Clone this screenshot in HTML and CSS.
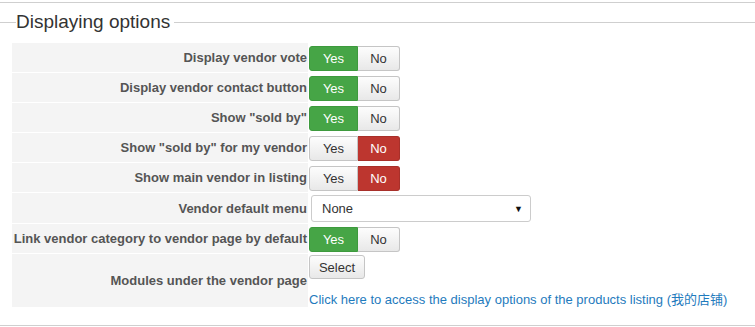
FILE: index.html
```html
<!DOCTYPE html>
<html lang="en">
  <head>
    <meta charset="UTF-8" />
    <title>Displaying options</title>
    <link rel="stylesheet" href="styles.css">
  </head>
  <body>
    <div class="topline"></div>

    <fieldset class="options">
      <legend>Displaying options</legend>

      <div class="form-grid">
        <div class="label">Display vendor vote</div>
        <div class="control">
          <div class="toggle">
            <span class="btn yes on">Yes</span><span class="btn no">No</span>
          </div>
        </div>

        <div class="label">Display vendor contact button</div>
        <div class="control">
          <div class="toggle">
            <span class="btn yes on">Yes</span><span class="btn no">No</span>
          </div>
        </div>

        <div class="label">Show "sold by"</div>
        <div class="control">
          <div class="toggle">
            <span class="btn yes on">Yes</span><span class="btn no">No</span>
          </div>
        </div>

        <div class="label">Show "sold by" for my vendor</div>
        <div class="control">
          <div class="toggle">
            <span class="btn yes">Yes</span><span class="btn no on">No</span>
          </div>
        </div>

        <div class="label">Show main vendor in listing</div>
        <div class="control">
          <div class="toggle">
            <span class="btn yes">Yes</span><span class="btn no on">No</span>
          </div>
        </div>

        <div class="label wide">Vendor default menu</div>
        <div class="control">
          <div class="dropdown">
            <span>None</span>
            <span class="caret">&#9660;</span>
          </div>
        </div>

        <div class="label">Link vendor category to vendor page by default</div>
        <div class="control">
          <div class="toggle">
            <span class="btn yes on">Yes</span><span class="btn no">No</span>
          </div>
        </div>

        <div class="label tall">Modules under the vendor page</div>
        <div class="control stack">
          <span class="btn select">Select</span>
          <a href="#" class="link">Click here to access the display options of the products listing (我的店铺)</a>
        </div>
      </div>
    </fieldset>
  </body>
</html>
```

FILE: styles.css
```css
body {
  margin: 0;
  font-family: "Liberation Sans", Arial, "Noto Sans CJK SC", sans-serif;
  font-size: 13px;
  color: #333;
  background-color: white;
}

.topline {
  margin-top: 2px;
  border-top: 1px solid #cfcfcf;
}

.options {
  margin: 8px 0 0 0;
  padding: 10px 0 17px 12px;
  border: none;
  border-top: 1px solid #cfcfcf;
  border-bottom: 1px solid #cfcfcf;
}

.options legend {
  margin-left: 4px;
  padding: 0 4px 0 0;
  font-size: 19px;
  color: #333;
}

.form-grid {
  display: grid;
  grid-template-columns: 296px auto;
}

.label {
  display: flex;
  align-items: center;
  justify-content: flex-end;
  height: 29px;
  padding-right: 1px;
  background-color: #f4f4f4;
  border-bottom: 1px solid #fff;
  font-weight: bold;
  color: #555;
  white-space: nowrap;
}

.label.wide {
  height: 30px;
}

.label.tall {
  height: 53px;
}

.control {
  display: flex;
  align-items: center;
  padding-left: 1px;
}

.control.stack {
  flex-direction: column;
  align-items: flex-start;
  justify-content: flex-start;
  padding-top: 1px;
}

.toggle {
  display: flex;
}

.btn {
  display: inline-flex;
  align-items: center;
  justify-content: center;
  box-sizing: border-box;
  height: 25px;
  border: 1px solid #c5c5c5;
  background: linear-gradient(#fdfdfd, #e8e8e8);
  color: #333;
}

.btn.yes {
  width: 49px;
  border-radius: 3px 0 0 3px;
}

.btn.no {
  width: 42px;
  border-left: none;
  border-radius: 0 3px 3px 0;
}

.btn.yes.on {
  background: #46a546;
  border-color: #3d9a3d;
  color: #fff;
}

.btn.no.on {
  background: #bd362f;
  border-color: #a8302a;
  color: #fff;
}

.dropdown {
  display: flex;
  align-items: center;
  justify-content: space-between;
  box-sizing: border-box;
  width: 220px;
  height: 27px;
  margin-left: 2px;
  padding: 0 7px 0 10px;
  border: 1px solid #ccc;
  border-radius: 3px;
  background: #fff;
  color: #333;
}

.caret {
  font-size: 9px;
  color: #111;
}

.btn.select {
  width: 56px;
  height: 24px;
  border-radius: 3px;
}

.link {
  margin-top: 10px;
  color: #1f7bbd;
  text-decoration: none;
}
```
